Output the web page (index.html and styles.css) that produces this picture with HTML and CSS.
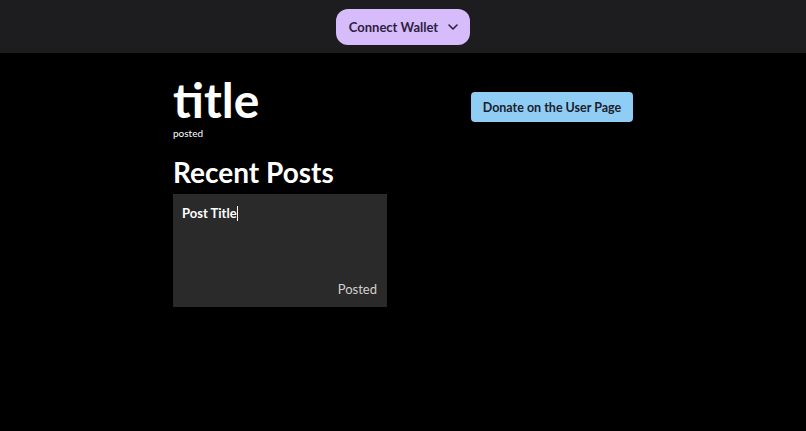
FILE: index.html
```html
<!DOCTYPE html>
<html>
<head>
<meta charset="utf-8">
<link rel="stylesheet" href="styles.css">
</head>
<body>
<header class="topbar">
  <button class="wallet-btn">Connect Wallet
    <svg class="chev" width="12" height="12" viewBox="0 0 12 12"><path d="M2 4l4 4 4-4" fill="none" stroke="#2d2140" stroke-width="1.6" stroke-linecap="round" stroke-linejoin="round"/></svg>
  </button>
</header>
<main class="content">
  <div class="head-row">
    <div class="title-block">
      <h1 class="title">title</h1>
      <div class="posted">posted</div>
    </div>
    <button class="donate-btn">Donate on the User Page</button>
  </div>
  <h2 class="recent">Recent Posts</h2>
  <div class="card">
    <div class="card-title">Post Title<span class="caret"></span></div>
    <div class="card-date">Posted</div>
  </div>
</main>
</body>
</html>
```
FILE: styles.css
```css
* { box-sizing: border-box; }
html, body { margin: 0; padding: 0; background: #000; }
body { font-family: "Lato", "Open Sans", sans-serif; color: #fff; }
.topbar {
  height: 53px;
  background: #1d1d1f;
  display: flex;
  justify-content: center;
  align-items: center;
}
.wallet-btn {
  height: 36px;
  width: 134px;
  border: none;
  border-radius: 12px;
  background: #d6bcfa;
  color: #2d2140;
  font-family: inherit;
  font-weight: 700;
  font-size: 13px;
  display: flex;
  align-items: center;
  justify-content: center;
  gap: 9px;
  padding: 0 0 0 2px;
}
.content {
  width: 460px;
  margin: 0 auto;
  padding-top: 20px;
}
.head-row {
  display: flex;
  justify-content: space-between;
  align-items: flex-start;
}
.title {
  margin: 0;
  font-size: 48px;
  line-height: 54px;
  font-weight: 700;
}
.posted { font-size: 10px; line-height: 12px; margin-top: 0; }
.donate-btn {
  margin-top: 19px;
  width: 162px;
  height: 30px;
  border: none;
  border-radius: 4px;
  background: #90cdf4;
  color: #1a202c;
  font-family: inherit;
  font-size: 12.5px;
  font-weight: 700;
  padding: 0;
}
.recent {
  margin: 16px 0 0;
  font-size: 28px;
  line-height: 34px;
  font-weight: 700;
}
.card {
  margin-top: 5px;
  width: 214px;
  height: 113px;
  background: #2a2a2a;
  padding: 11px 10px 10px 9px;
  display: flex;
  flex-direction: column;
  justify-content: space-between;
}
.card-title { font-size: 13px; font-weight: 700; line-height: 16px; display: flex; align-items: center; }
.caret { display: inline-block; width: 1px; height: 15px; background: #fff; margin-left: 0; }
.card-date { align-self: flex-end; font-size: 13px; color: #d0d0d0; line-height: 16px; }
```
